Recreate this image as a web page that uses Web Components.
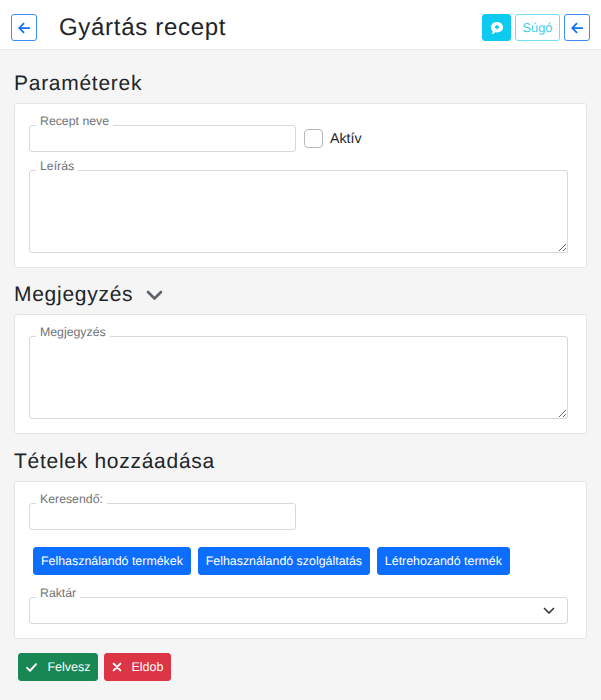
<!DOCTYPE html>
<html lang="hu">
<head>
<meta charset="utf-8">
<title>Gyártás recept</title>
<style>
  html, body { margin: 0; padding: 0; background: #f5f5f5; }
  body { font-family: "Liberation Sans", Arial, sans-serif; color: #212529; text-rendering: geometricPrecision; }
</style>
</head>
<body>
<recept-oldal></recept-oldal>

<template id="tpl-gomb">
  <style>
    :host { display: inline-block; }
    button {
      display: flex; align-items: center; justify-content: center; gap: var(--gap, 0);
      box-sizing: border-box; height: var(--h, 28px); width: var(--w, auto); padding: var(--pad, 0 7px);
      font: var(--fs, 12.4px) "Liberation Sans", Arial, sans-serif; text-rendering: geometricPrecision;
      border-radius: 3px; border: 1px solid; cursor: pointer;
    }
    :host([fajta=primary]) button { background: #0d6efd; border-color: #0d6efd; color: #fff; }
    :host([fajta=success]) button { background: #198754; border-color: #198754; color: #fff; }
    :host([fajta=danger]) button { background: #dc3545; border-color: #dc3545; color: #fff; }
    :host([fajta=info]) button { background: #0dcaf0; border-color: #0dcaf0; color: #fff; }
    :host([fajta=outline-info]) button { background: #fff; border-color: #6edff6; color: #3fcdf0; }
    :host([fajta=outline-primary]) button { background: #fff; border-color: #3d8bfd; color: #0d6efd; }
    svg { display: block; }
  </style>
  <button type="button"><slot></slot></button>
</template>

<template id="tpl-fejlec">
  <style>
    :host { display: flex; align-items: center; box-sizing: border-box; height: 50px; background: #fff; border-bottom: 1px solid #e9e9e9; padding: 6px 11px 0 11px; }
    h1 { flex: 1; margin: 0 0 0 22px; font: 400 24px "Liberation Sans", Arial, sans-serif; letter-spacing: .7px; color: #212529; }
    .jobb { display: flex; gap: 4px; }
  </style>
  <slot name="vissza"></slot>
  <h1><slot></slot></h1>
  <div class="jobb"><slot name="jobb"></slot></div>
</template>

<template id="tpl-szekcio">
  <style>
    :host { display: block; margin: 0 14px; }
    h2 { display: flex; align-items: center; gap: 13px; box-sizing: border-box; margin: 0; padding-top: 2px; height: 40px; font: 400 21px "Liberation Sans", Arial, sans-serif; letter-spacing: .72px; color: #212529; }
    .kartya { box-sizing: border-box; background: #fff; border: 1px solid #e4e5e7; border-radius: 3px; padding: 21px 18px 14px 14px; display: flex; flex-direction: column; }
  </style>
  <h2><slot name="cim"></slot></h2>
  <div class="kartya"><slot></slot></div>
</template>

<template id="tpl-mezo">
  <style>
    :host { display: block; position: relative; }
    label {
      position: absolute; left: 7px; top: -12px; padding: 0 4px; background: #fff;
      font: 12.3px/16px "Liberation Sans", Arial, sans-serif; color: #6f7378; z-index: 1;
    }
    input, textarea, .valaszto {
      display: block; box-sizing: border-box; width: 100%; margin: 0; background: #fff;
      border: 1px solid #d5d8dd; border-radius: 3px; font: 14px "Liberation Sans", Arial, sans-serif; outline: none;
    }
    input, .valaszto { height: 27px; }
    textarea { height: 83px; resize: vertical; padding: 4px 8px; }
    .valaszto { position: relative; }
    .valaszto svg { position: absolute; right: 12px; top: 8px; }
  </style>
  <label></label>
  <div id="hely"></div>
</template>

<template id="tpl-jelolo">
  <style>
    :host { display: inline-flex; align-items: center; gap: 7px; font: 14.2px "Liberation Sans", Arial, sans-serif; color: #212529; }
    i { display: block; box-sizing: border-box; width: 19px; height: 19px; border: 1px solid #b4b8bc; border-radius: 4px; background: #fff; }
  </style>
  <i></i><slot></slot>
</template>

<template id="tpl-oldal">
  <style>
    :host { display: block; height: 700px; overflow: hidden; }
    .tartalom { padding-top: 13px; }
    .sor { display: flex; align-items: center; gap: 8px; }
    .sor form-mezo { width: 267px; }
    form-szekcio + form-szekcio { margin-top: 6px; }
    form-szekcio + form-szekcio + form-szekcio { margin-top: 7px; }
    .m18 { margin-top: 18px; }
    .gombok { display: flex; gap: 6.8px; margin: 17px 0 0 4px; }
    .also { display: flex; gap: 6px; margin: 14px 0 0 18px; }
    .also kis-gomb { --fs: 12.5px; }
    .chev { display: block; }
  </style>
  <fejlec-sav>
    <kis-gomb slot="vissza" fajta="outline-primary" style="--w:26px;--h:27px;--pad:0">
      <svg width="14" height="14" viewBox="0 0 16 16" fill="none" stroke="#0d6efd" stroke-width="2" stroke-linecap="round" stroke-linejoin="round"><path d="M14 8H2.5M7.5 3l-5 5 5 5"/></svg>
    </kis-gomb>
    Gyártás recept
    <kis-gomb slot="jobb" fajta="info" style="--w:29px;--h:27px;--pad:0">
      <svg width="14" height="14" viewBox="0 0 16 16"><path fill="#fff" d="M8 1.200c3.900 0 7 2.600 7 5.900S11.900 13 8 13c-.7 0-1.300-.1-1.900-.2-.9.9-2.400 1.900-4.300 2 .8-.8 1.300-2 1.400-3.200C1.900 10.500 1 8.900 1 7.100 1 3.800 4.100 1.200 8 1.200z"/><path stroke="#0dcaf0" stroke-width="1.800" d="M8 4.500v5M5.500 7h5"/></svg>
    </kis-gomb>
    <kis-gomb slot="jobb" fajta="outline-info" style="--w:45px;--h:27px;--pad:0;--fs:12.8px">Súgó</kis-gomb>
    <kis-gomb slot="jobb" fajta="outline-primary" style="--w:26px;--h:27px;--pad:0">
      <svg width="14" height="14" viewBox="0 0 16 16" fill="none" stroke="#0d6efd" stroke-width="2" stroke-linecap="round" stroke-linejoin="round"><path d="M14 8H2.5M7.5 3l-5 5 5 5"/></svg>
    </kis-gomb>
  </fejlec-sav>
  <div class="tartalom">
    <form-szekcio>
      <span slot="cim">Paraméterek</span>
      <div class="sor">
        <form-mezo cimke="Recept neve" tipus="input"></form-mezo>
        <jelolo-doboz>Aktív</jelolo-doboz>
      </div>
      <form-mezo class="m18" cimke="Leírás" tipus="textarea"></form-mezo>
    </form-szekcio>
    <form-szekcio>
      <span slot="cim">Megjegyzés</span>
      <svg slot="cim" class="chev" width="17" height="11" viewBox="0 0 17 11" fill="none" stroke="#5c636a" stroke-width="2.6" stroke-linecap="round" stroke-linejoin="round"><path d="M2 2l6.500 6.500L15 2"/></svg>
      <form-mezo cimke="Megjegyzés" tipus="textarea"></form-mezo>
    </form-szekcio>
    <form-szekcio>
      <span slot="cim">Tételek hozzáadása</span>
      <form-mezo style="width:267px" cimke="Keresendő:" tipus="input"></form-mezo>
      <div class="gombok">
        <kis-gomb fajta="primary">Felhasználandó termékek</kis-gomb>
        <kis-gomb fajta="primary">Felhasználandó szolgáltatás</kis-gomb>
        <kis-gomb fajta="primary">Létrehozandó termék</kis-gomb>
      </div>
      <form-mezo style="margin-top:22px" cimke="Raktár" tipus="select"></form-mezo>
    </form-szekcio>
    <div class="also">
      <kis-gomb fajta="success" style="--h:28px;--w:80px;--pad:0;--gap:9px">
        <svg width="13" height="13" viewBox="0 0 16 16" fill="none" stroke="#fff" stroke-width="2.4" stroke-linecap="round" stroke-linejoin="round"><path d="M2.500 8.500l3.700 3.500 7.300-8"/></svg>
        Felvesz
      </kis-gomb>
      <kis-gomb fajta="danger" style="--h:28px;--w:67px;--pad:0;--gap:10px">
        <svg width="10" height="10" viewBox="0 0 12 12" fill="none" stroke="#fff" stroke-width="2.4" stroke-linecap="round"><path d="M2 2l8 8M10 2l-8 8"/></svg>
        Eldob
      </kis-gomb>
    </div>
  </div>
</template>

<script>
// Közös segéd: sablon klónozása nyitott shadow rootba
function sablon(elem, id) {
  const root = elem.attachShadow({ mode: 'open' });
  root.appendChild(document.getElementById(id).content.cloneNode(true));
  return root;
}

class KisGomb extends HTMLElement {
  constructor() { super(); sablon(this, 'tpl-gomb'); }
}

class FejlecSav extends HTMLElement {
  constructor() { super(); sablon(this, 'tpl-fejlec'); }
}

class FormSzekcio extends HTMLElement {
  constructor() { super(); sablon(this, 'tpl-szekcio'); }
}

class JeloloDoboz extends HTMLElement {
  constructor() { super(); sablon(this, 'tpl-jelolo'); }
}

class FormMezo extends HTMLElement {
  constructor() { super(); sablon(this, 'tpl-mezo'); }

  connectedCallback() {
    const root = this.shadowRoot;
    root.querySelector('label').textContent = this.getAttribute('cimke');
    const hely = root.getElementById('hely');
    const tipus = this.getAttribute('tipus');
    if (tipus === 'textarea') {
      hely.innerHTML = '<textarea></textarea>';
    } else if (tipus === 'select') {
      hely.innerHTML = '<div class="valaszto"><svg width="12" height="10" viewBox="0 0 12 10" fill="none" stroke="#343a40" stroke-width="1.700" stroke-linecap="round" stroke-linejoin="round"><path d="M1.500 2.500L6 7l4.500-4.500"/></svg></div>';
    } else {
      hely.innerHTML = '<input type="text">';
    }
  }
}

class ReceptOldal extends HTMLElement {
  constructor() { super(); sablon(this, 'tpl-oldal'); }
}

customElements.define('kis-gomb', KisGomb);
customElements.define('fejlec-sav', FejlecSav);
customElements.define('form-szekcio', FormSzekcio);
customElements.define('jelolo-doboz', JeloloDoboz);
customElements.define('form-mezo', FormMezo);
customElements.define('recept-oldal', ReceptOldal);
</script>
</body>
</html>
